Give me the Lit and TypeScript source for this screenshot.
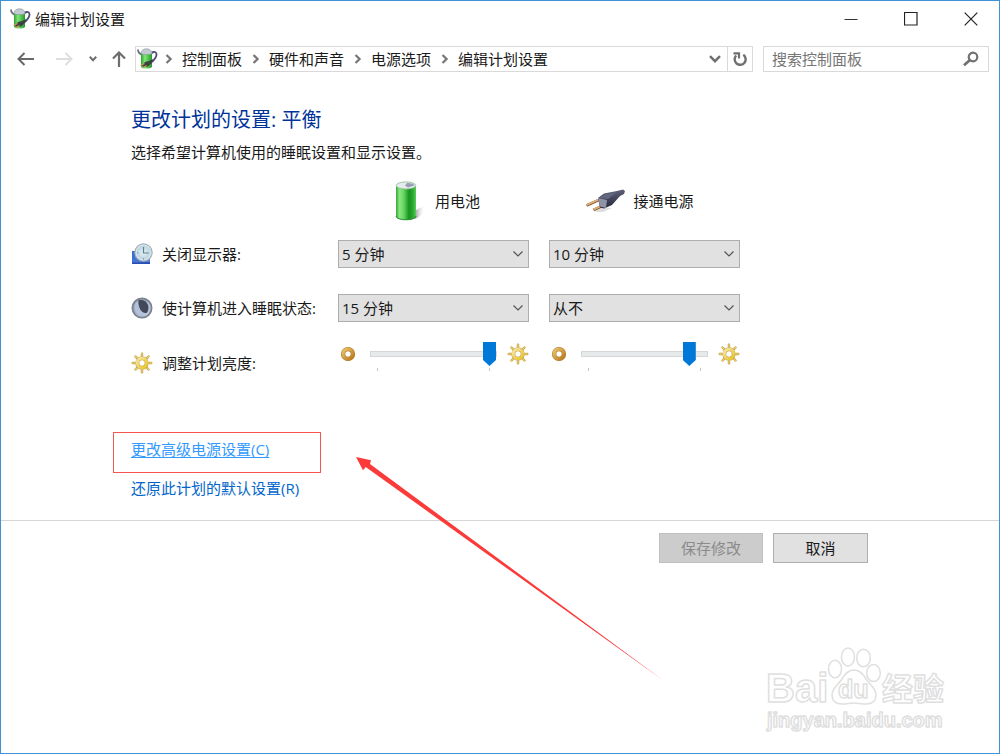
import { LitElement, html, css, svg } from "lit";
import { customElement, property } from "lit/decorators.js";

const chevron = html`<svg class="sep" width="8" height="10" viewBox="0 0 8 10" aria-hidden="true">
  <path d="M1.500 1 5.600 5 1.500 9" fill="none" stroke="#767676" stroke-width="2.200" />
</svg>`;

const rays = [0, 45, 90, 135, 180, 225, 270, 315];

const powerIcon = html`<svg width="22" height="22" viewBox="0 0 22 22" aria-hidden="true">
  <defs>
    <linearGradient id="pg" x1="0" x2="1">
      <stop offset="0" stop-color="#2f9f36" />
      <stop offset=".35" stop-color="#7fe873" />
      <stop offset="1" stop-color="#259a2c" />
    </linearGradient>
  </defs>
  <path d="M1 1.500c0 3.500 2 5 5.500 5.500" fill="none" stroke="#6a737c" stroke-width="1.800" />
  <path d="M13 7.500c1-4 6.500-5 6.500-1 0 3-2.500 5.500-4.500 7.500" fill="none" stroke="#4a4d72" stroke-width="1.800" />
  <path d="M4 5v13.500c0 2.800 11 2.800 11 0V5z" fill="url(#pg)" />
  <path d="M4 5.500C4 2.500 6.500.800 9.500.800s5.500 1.700 5.500 4.700c-2 1.600-9 1.600-11 0z" fill="#c3cbd2" stroke="#87929b" stroke-width=".6" />
  <path d="M5 17.500l3-3.500 4-1 4-2-1 4-4 3.500-4 .5z" fill="#3c4242" />
  <path d="M3.500 17.500l4-2M5.500 20l4-2.500" stroke="#c79a55" stroke-width="1.200" />
</svg>`;

const sunIcon = html`<svg width="22" height="22" viewBox="0 0 22 22" aria-hidden="true">
  <defs>
    <linearGradient id="sg" x1="0" y1="0" x2="1" y2="1">
      <stop offset="0" stop-color="#f7e6a0" />
      <stop offset="1" stop-color="#e8c428" />
    </linearGradient>
  </defs>
  ${rays.map(
    (a) => svg`<g transform="rotate(${a} 11 11)">
      <path d="M11 1.800v1.600" stroke="#b99646" stroke-width="2.400" stroke-linecap="round" />
      <path d="M11 1.800v1.400" stroke="#f0d45c" stroke-width="1.400" stroke-linecap="round" />
    </g>`
  )}
  <circle cx="11" cy="11" r="4.700" fill="#fff" stroke="#c3a251" stroke-width="4" />
  <circle cx="11" cy="11" r="4.700" fill="none" stroke="url(#sg)" stroke-width="3" />
</svg>`;

const dimIcon = html`<svg width="16" height="16" viewBox="0 0 16 16" aria-hidden="true">
  <defs>
    <linearGradient id="dg" x1="0" y1="0" x2="1" y2="1">
      <stop offset="0" stop-color="#e9c46c" />
      <stop offset="1" stop-color="#bd7a1c" />
    </linearGradient>
  </defs>
  <circle cx="8" cy="8" r="4.900" fill="#fff" stroke="#a8782c" stroke-width="4.400" />
  <circle cx="8" cy="8" r="4.900" fill="none" stroke="url(#dg)" stroke-width="3.400" />
</svg>`;

const clockIcon = html`<svg width="22" height="22" viewBox="0 0 22 22" aria-hidden="true">
  <defs>
    <linearGradient id="cb" x1="0" y1="0" x2="1" y2="1">
      <stop offset="0" stop-color="#3567cf" />
      <stop offset="1" stop-color="#5c86e0" />
    </linearGradient>
    <radialGradient id="cf">
      <stop offset="0" stop-color="#e8f5fa" />
      <stop offset=".7" stop-color="#bdd6e2" />
      <stop offset="1" stop-color="#eef3f5" />
    </radialGradient>
  </defs>
  <path d="M1 8h18v13H1z" fill="url(#cb)" />
  <path d="M1 19.500 19 19v2H1z" fill="#2a4fae" />
  <circle cx="12.500" cy="9.500" r="8.600" fill="url(#cf)" stroke="#a3afb6" stroke-width="1.200" />
  <path d="M12.500 4v6h5" fill="none" stroke="#5f7f90" stroke-width="1.200" />
  <path d="M6 10h1.500M12.500 15v1.500" stroke="#7d97a5" stroke-width="1" />
</svg>`;

const moonIcon = html`<svg width="22" height="22" viewBox="0 0 22 22" aria-hidden="true">
  <defs>
    <linearGradient id="mg" x1="0" y1="0" x2="1" y2="1">
      <stop offset="0" stop-color="#8591a8" />
      <stop offset="1" stop-color="#cbdaf0" />
    </linearGradient>
  </defs>
  <circle cx="11" cy="11" r="9.600" fill="url(#mg)" stroke="#7b828d" stroke-width="1.800" />
  <path d="M7.500 3.500C11 2 15.500 4 17 8c1 3.500 0 7-1.500 8C11 17 7 11 7.500 3.500z" fill="#424858" />
  <path d="M4.500 6c-2.500 5 0 10.500 5 12.500 2.500 1 5 0 6-2-5.500.500-9-6-8.500-12.500z" fill="#b3c1da" />
</svg>`;

const batteryIcon = html`<svg width="40" height="42" viewBox="0 0 40 42" aria-hidden="true">
  <defs>
    <linearGradient id="bg" x1="0" x2="1">
      <stop offset="0" stop-color="#36a837" />
      <stop offset=".18" stop-color="#8be783" />
      <stop offset=".4" stop-color="#62d35d" />
      <stop offset=".65" stop-color="#169120" />
      <stop offset=".85" stop-color="#2cab33" />
      <stop offset="1" stop-color="#5ccb58" />
    </linearGradient>
    <linearGradient id="bs" x1="0" x2="1">
      <stop offset="0" stop-color="#999" />
      <stop offset="1" stop-color="#fff" stop-opacity="0" />
    </linearGradient>
  </defs>
  <path d="M28 31c5-4 9-5 10-3 0 4-5 9-10 11z" fill="url(#bs)" />
  <path d="M9 6v30c0 5 20 5 20 0V6z" fill="url(#bg)" />
  <path d="M9 36c0 5 20 5 20 0" fill="none" stroke="#23882a" />
  <ellipse cx="19" cy="5.500" rx="9.800" ry="3.600" fill="#e6ebee" stroke="#8aba8c" stroke-width=".8" />
  <path d="M20 3c4 0 7 1 7.500 2.500L21 7.500l-3-2z" fill="#9a9cb8" />
</svg>`;

const plugIcon = html`<svg width="40" height="24" viewBox="0 0 40 24" aria-hidden="true">
  <defs>
    <linearGradient id="pl" x1="0" y1="0" x2="0" y2="1">
      <stop offset="0" stop-color="#5d6078" />
      <stop offset="1" stop-color="#25283a" />
    </linearGradient>
  </defs>
  <path d="M15 18l12 1-9 4-8 0z" fill="#ddd" />
  <path d="M1.500 16.500 15 10.500M8.500 21 20 15.500" stroke="#8b643e" stroke-width="3" />
  <path d="M1.500 16 15 10M8.500 20.500 20 15" stroke="#e3b27a" stroke-width="1.600" />
  <path d="M13 9l6-4.500L32 2l6-1.500 2 1.500-1 3-4 2-8 9-8 3.500-4-1z" fill="url(#pl)" />
  <path d="M13 9l9 2-1 8-6-1.500z" fill="#8f93a6" />
  <path d="M14 9l6-4 12-2-9 7z" fill="#63677f" />
</svg>`;

@customElement("brightness-slider")
class BrightnessSlider extends LitElement {
  @property() label = "";
  @property({ type: Number }) value = 100;

  static styles = css`
    :host {
      display: flex;
      align-items: center;
      padding: 0 0 0 2px;
    }
    svg {
      display: block;
      flex: none;
    }
    .track {
      flex: 1;
      margin: 0 10px 0 14px;
      position: relative;
      display: flex;
    }
    .track::before,
    .track::after {
      content: "";
      position: absolute;
      top: 26px;
      width: 1px;
      height: 3px;
      background: #c4c4c4;
    }
    .track::before {
      left: 7px;
    }
    .track::after {
      right: 7px;
    }
    input {
      appearance: none;
      -webkit-appearance: none;
      width: 100%;
      min-width: 0;
      height: 24px;
      margin: 0;
      background: none;
    }
    input::-webkit-slider-runnable-track {
      box-sizing: border-box;
      height: 6px;
      background: #e7eaea;
      border: 1px solid #d6d6d6;
    }
    input::-webkit-slider-thumb {
      -webkit-appearance: none;
      width: 13px;
      height: 24px;
      margin-top: -10px;
      background: #0078d7;
      clip-path: polygon(0 0, 100% 0, 100% 75%, 50% 100%, 0 75%);
    }
  `;

  render() {
    return html`${dimIcon}
      <div class="track">
        <input type="range" min="0" max="100" .value=${String(this.value)} aria-label=${this.label} />
      </div>
      ${sunIcon}`;
  }
}

@customElement("app-root")
class AppRoot extends LitElement {
  static styles = css`
    :host {
      display: block;
      font: 15px/20px "Open Sans", "Noto Sans CJK SC", sans-serif;
      color: #1a1a1a;
    }
    * {
      box-sizing: border-box;
    }
    svg {
      display: block;
      flex: none;
    }
    button,
    input,
    select {
      font: inherit;
      color: inherit;
      margin: 0;
    }
    .window {
      position: relative;
      min-height: 100vh;
      border: 1px solid #3f92d8;
      background: #fff;
      overflow: hidden;
    }
    .titlebar {
      display: flex;
      align-items: center;
      height: 36px;
      padding-left: 9px;
      gap: 3px;
    }
    .title {
      flex: 1;
      font-size: 15px;
      font-weight: 400;
      margin: 0;
    }
    .caption {
      display: grid;
      place-items: center;
      width: 57px;
      height: 36px;
      border: 0;
      padding: 0;
      background: none;
    }
    .nav {
      display: flex;
      align-items: center;
      padding: 9px 10px 0 12px;
    }
    .icon-button {
      display: grid;
      place-items: center;
      height: 26px;
      border: 0;
      padding: 0;
      background: none;
    }
    .arrow {
      width: 24px;
    }
    .forward {
      margin: 0 9px 0 15px;
    }
    .recent {
      width: 16px;
    }
    .up {
      width: 24px;
      margin: 0 4px 0 6px;
    }
    .address {
      flex: 1;
      display: flex;
      align-items: center;
      height: 26px;
      border: 1px solid #d9d9d9;
      padding-left: 1px;
    }
    .crumbs {
      flex: 1;
      display: flex;
      align-items: center;
      gap: 10px;
      list-style: none;
      margin: 0;
      padding: 0 0 0 6px;
    }
    .crumbs li {
      display: flex;
      align-items: center;
      gap: 9px;
    }
    .crumbs a {
      color: inherit;
      text-decoration: none;
    }
    .drop {
      width: 24px;
    }
    .refresh {
      width: 25px;
      height: 24px;
      border-left: 1px solid #d9d9d9;
    }
    .search {
      display: flex;
      align-items: center;
      width: 226px;
      height: 26px;
      margin-left: 10px;
      border: 1px solid #d9d9d9;
      padding: 0 9px 0 8px;
    }
    .search input {
      flex: 1;
      min-width: 0;
      border: 0;
      padding: 0;
      background: none;
      outline: 0;
    }
    .search input::placeholder {
      color: #757575;
      opacity: 1;
    }
    .content {
      padding: 36px 130px 22px;
    }
    h1 {
      margin: 0;
      font-size: 20px;
      line-height: 24px;
      font-weight: 400;
      color: #003399;
    }
    .intro {
      margin: 10px 0 0;
    }
    .plan {
      display: grid;
      grid-template-columns: 187px 191px 191px;
      column-gap: 20px;
      align-items: center;
      margin-top: 18px;
    }
    .source {
      display: flex;
      align-items: center;
      justify-content: center;
      gap: 8px;
      height: 42px;
    }
    .mains {
      padding-right: 10px;
    }
    .plan label,
    .row-name {
      display: flex;
      align-items: center;
      gap: 9px;
      white-space: nowrap;
    }
    .screen,
    .sleep {
      display: grid;
      grid-column: 1 / -1;
      grid-template-columns: subgrid;
      align-items: center;
    }
    .screen {
      margin-top: 18px;
    }
    .sleep {
      margin-top: 26px;
    }
    .brightness {
      display: grid;
      grid-column: 1 / -1;
      grid-template-columns: subgrid;
      align-items: start;
      margin-top: 20px;
    }
    .row-name {
      padding-top: 10px;
    }
    .select {
      display: grid;
      align-items: center;
    }
    .select > * {
      grid-area: 1 / 1;
    }
    .select svg {
      justify-self: end;
      margin-right: 6px;
      pointer-events: none;
    }
    select {
      appearance: none;
      width: 100%;
      height: 28px;
      border: 1px solid #adadad;
      border-radius: 0;
      background: #e1e1e1;
      padding: 0 24px 0 3px;
    }
    .links {
      display: flex;
      flex-direction: column;
      align-items: flex-start;
      gap: 19px;
      margin-top: 65px;
    }
    .links a {
      position: relative;
      color: #0066cc;
      text-decoration: none;
    }
    .links .hot {
      color: #3399ff;
      text-decoration: underline;
      text-underline-offset: 2px;
    }
    .frame {
      position: absolute;
      left: -18px;
      top: -7px;
      width: 208px;
      height: 41px;
      border: 1px solid #f65353;
      pointer-events: none;
    }
    .pointer {
      position: absolute;
      left: 225px;
      top: 18px;
      pointer-events: none;
    }
    .footer {
      display: flex;
      justify-content: flex-end;
      gap: 10px;
      padding: 12px 131px;
      border-top: 1px solid #d6d6d6;
    }
    .footer button {
      min-width: 95px;
      height: 30px;
      padding: 0 21px;
      border: 1px solid #adadad;
      background: #e1e1e1;
    }
    .footer button:disabled {
      border-color: #bfbfbf;
      background: #cccccc;
      color: #8b8b8b;
    }
    .watermark {
      position: absolute;
      right: 49px;
      bottom: 13px;
      pointer-events: none;
    }
    .mark {
      fill: #fff;
      stroke: #dfdfdf;
      stroke-width: 1.500px;
      stroke-linejoin: round;
    }
    .brand {
      font: bold 40px "Liberation Sans", sans-serif;
    }
    .du {
      font: bold 25px "Liberation Sans", sans-serif;
    }
    .exp {
      font: bold 31px "Noto Sans CJK SC", sans-serif;
    }
    .url {
      font: bold 20px "Liberation Sans", sans-serif;
    }
  `;

  private select(id: string, label: string, options: string[], value: string) {
    return html`<div class="select">
      <select id=${id} aria-label=${label}>
        ${options.map((o) => html`<option ?selected=${o === value}>${o}</option>`)}
      </select>
      <svg width="10" height="6" viewBox="0 0 10 6" aria-hidden="true">
        <path d="M.5.500 5 5 9.500.500" fill="none" stroke="#555" stroke-width="1.200" />
      </svg>
    </div>`;
  }

  render() {
    const times = ["5 分钟", "10 分钟", "15 分钟", "从不"];
    const crumbs = ["控制面板", "硬件和声音", "电源选项", "编辑计划设置"];
    return html`
      <div class="window">
        <header class="titlebar">
          ${powerIcon}
          <p class="title">编辑计划设置</p>
          <button class="caption" aria-label="最小化">
            <svg width="14" height="14" viewBox="0 0 14 14"><path d="M.5 7.500h13" stroke="#333" /></svg>
          </button>
          <button class="caption" aria-label="最大化">
            <svg width="14" height="14" viewBox="0 0 14 14"><path d="M.5.500h12.500v12.500H.5z" fill="none" stroke="#222" stroke-width="1.200" /></svg>
          </button>
          <button class="caption" aria-label="关闭">
            <svg width="14" height="14" viewBox="0 0 14 14"><path d="M.7.700l12.600 12.600M13.300.700.700 13.300" stroke="#222" stroke-width="1.200" /></svg>
          </button>
        </header>

        <nav class="nav">
          <button class="icon-button arrow" aria-label="后退">
            <svg width="17" height="14" viewBox="0 0 17 14"><path d="M17 7H1.500M7.500 1l-6 6 6 6" fill="none" stroke="#686868" stroke-width="2" /></svg>
          </button>
          <button class="icon-button arrow forward" aria-label="前进">
            <svg width="17" height="14" viewBox="0 0 17 14"><path d="M0 7h15.500M9.500 1l6 6-6 6" fill="none" stroke="#dedede" stroke-width="2" /></svg>
          </button>
          <button class="icon-button recent" aria-label="最近浏览的位置">
            <svg width="8" height="6" viewBox="0 0 8 6"><path d="M.8.800 4 4.200 7.200.800" fill="none" stroke="#6e6e6e" stroke-width="2" /></svg>
          </button>
          <button class="icon-button up" aria-label="上移">
            <svg width="14" height="16" viewBox="0 0 14 16"><path d="M7 16V1.500M1 7.500l6-6 6 6" fill="none" stroke="#6e6e6e" stroke-width="2.200" /></svg>
          </button>
          <div class="address">
            ${powerIcon}
            <ol class="crumbs">
              ${crumbs.map((c) => html`<li>${chevron}<a href="#">${c}</a></li>`)}
            </ol>
            <button class="icon-button drop" aria-label="以前的位置">
              <svg width="12" height="8" viewBox="0 0 12 8"><path d="M1 1.200l5 5 5-5" fill="none" stroke="#6e6e6e" stroke-width="2.400" /></svg>
            </button>
            <button class="icon-button refresh" aria-label="刷新">
              <svg width="14" height="15" viewBox="0 0 14 15">
                <path d="M10.300 2.800A5.500 5.500 0 1 1 3.200 3.500" fill="none" stroke="#707070" stroke-width="2.400" />
                <path d="M.5 1.300h5.500v5.200" fill="none" stroke="#707070" stroke-width="2.200" />
              </svg>
            </button>
          </div>
          <div class="search">
            <input type="search" placeholder="搜索控制面板" aria-label="搜索控制面板" />
            <svg width="16" height="16" viewBox="0 0 16 16" aria-hidden="true">
              <circle cx="10" cy="6" r="4.300" fill="none" stroke="#707070" stroke-width="2.200" />
              <path d="M7 9l-6 5.200" stroke="#707070" stroke-width="2.800" />
            </svg>
          </div>
        </nav>

        <main class="content">
          <h1>更改计划的设置: 平衡</h1>
          <p class="intro">选择希望计算机使用的睡眠设置和显示设置。</p>

          <div class="plan">
            <span></span>
            <div class="source">${batteryIcon}<span>用电池</span></div>
            <div class="source mains">${plugIcon}<span>接通电源</span></div>

            <div class="screen">
              <label for="screen-battery">${clockIcon}关闭显示器:</label>
              ${this.select("screen-battery", "用电池 关闭显示器", times, "5 分钟")}
              ${this.select("screen-mains", "接通电源 关闭显示器", times, "10 分钟")}
            </div>
            <div class="sleep">
              <label for="sleep-battery">${moonIcon}使计算机进入睡眠状态:</label>
              ${this.select("sleep-battery", "用电池 使计算机进入睡眠状态", times, "15 分钟")}
              ${this.select("sleep-mains", "接通电源 使计算机进入睡眠状态", times, "从不")}
            </div>
            <div class="brightness">
              <div class="row-name">${sunIcon}调整计划亮度:</div>
              <brightness-slider label="用电池 调整计划亮度" .value=${100}></brightness-slider>
              <brightness-slider label="接通电源 调整计划亮度" .value=${90}></brightness-slider>
            </div>
          </div>

          <div class="links">
            <a class="hot" href="#">更改高级电源设置(C)<span class="frame"></span>
              <svg class="pointer" width="310" height="226" viewBox="0 0 310 226" aria-hidden="true">
                <path d="M0 0 15 3.300 14 7 308 224 9.700 10 7 13.300z" fill="#fb3a3a" />
              </svg>
            </a>
            <a href="#">还原此计划的默认设置(R)</a>
          </div>
        </main>

        <footer class="footer">
          <button disabled>保存修改</button>
          <button>取消</button>
        </footer>

        <svg class="watermark" width="186" height="96" viewBox="0 0 186 96" aria-hidden="true">
          <g class="mark">
            <text class="brand" x="2" y="58">Bai</text>
            <ellipse cx="71" cy="25" rx="6.500" ry="8.800" />
            <ellipse cx="84" cy="13" rx="6.500" ry="9" />
            <ellipse cx="99.500" cy="14" rx="6.800" ry="8.800" />
            <ellipse cx="109.500" cy="29" rx="6.800" ry="8.500" />
            <path d="M90 26c-6 0-9 4-12 9-4 6-10 9-10 16 0 6 4 9 10 9 5 0 8-1 12-1s7 1 12 1c6 0 10-3 10-9 0-7-6-10-10-16-3-5-6-9-12-9z" />
            <text class="du" x="74" y="54">du</text>
            <text class="exp" x="118" y="56">经验</text>
            <text class="url" x="3" y="83">jingyan.baidu.com</text>
          </g>
        </svg>
      </div>
    `;
  }
}
